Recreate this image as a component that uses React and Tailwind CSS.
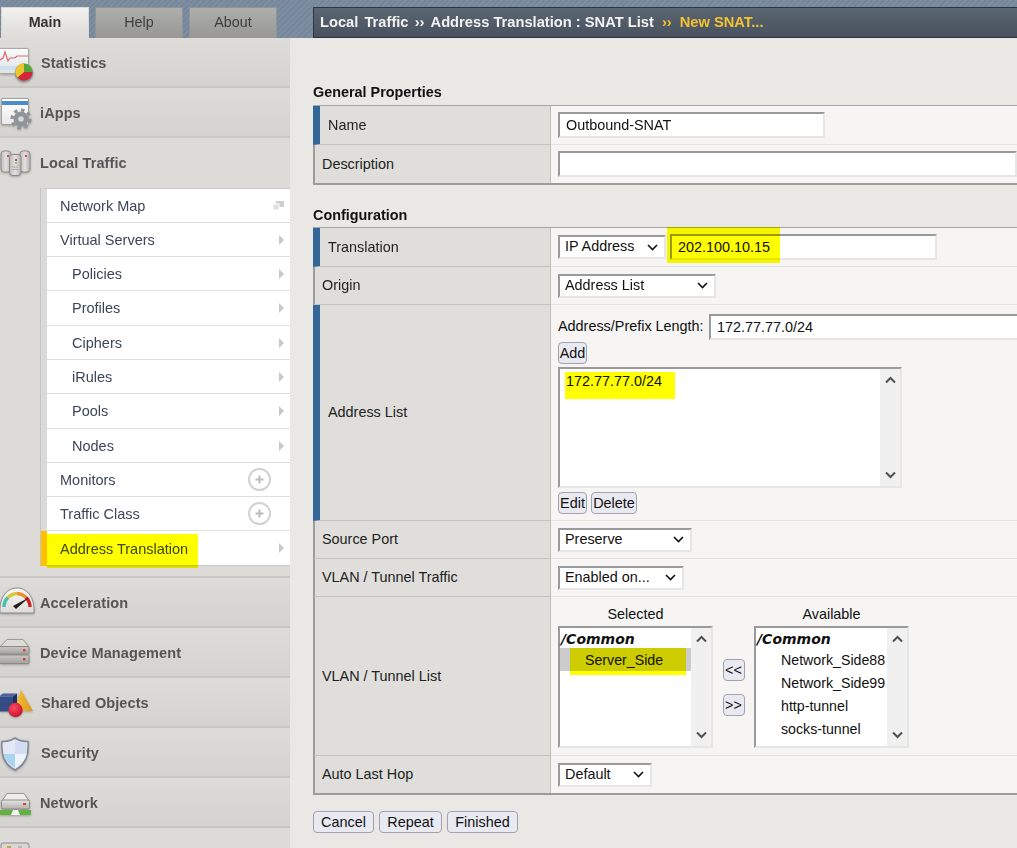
import React from "react";

const SANS = "font-['Liberation_Sans',Arial,sans-serif]";

function Ic({ children }) {
  return (
    <svg className="block shrink-0" width="40" height="50" viewBox="0 0 40 50">
      {children}
    </svg>
  );
}

function IconStats() {
  return (
    <Ic>
      <defs>
        <linearGradient id="st" x1="0" y1="0" x2="0" y2="1"><stop offset="0" stopColor="#fbfbfb" /><stop offset="1" stopColor="#dfe3e6" /></linearGradient>
      </defs>
      <rect x="-2" y="10" width="31" height="26" rx="2" fill="#a9a9a7" />
      <rect x="-2" y="11" width="30" height="24" rx="1" fill="url(#st)" />
      <rect x="-2" y="28" width="30" height="4" fill="#cfe0ee" />
      <path d="M0 22 L3 20 L5 14 L8 23 L10 20 L15 20 L17 18 L28 18" fill="none" stroke="#dc6a70" strokeWidth="1.2" />
      <circle cx="24" cy="35" r="9.5" fill="#7b7b78" opacity="0.45" />
      <circle cx="24" cy="34" r="8.5" fill="#55a63b" />
      <path d="M24 34 L32.5 34 A8.5 8.5 0 0 1 17.5 39.5 Z" fill="#d1263b" />
      <path d="M24 34 L17.5 39.5 A8.5 8.5 0 0 1 24 25.5 Z" fill="#eec52a" />
    </Ic>
  );
}

function IconApps() {
  return (
    <Ic>
      <defs>
        <linearGradient id="ap" x1="0" y1="0" x2="0" y2="1"><stop offset="0" stopColor="#ffffff" /><stop offset="1" stopColor="#e9e9e9" /></linearGradient>
      </defs>
      <rect x="1" y="10" width="28" height="27" rx="2" fill="#9f9f9d" />
      <rect x="2" y="11" width="26" height="25" rx="1" fill="url(#ap)" />
      <rect x="2" y="13" width="26" height="4" fill="#4d8ccb" />
      <circle cx="21" cy="31" r="7.5" fill="#8f9498" />
      <circle cx="21" cy="31" r="9" fill="none" stroke="#8f9498" strokeWidth="3.2" strokeDasharray="3.6 3.4" />
      <circle cx="21" cy="31" r="2.8" fill="#d8d8d6" />
    </Ic>
  );
}

function IconTraffic() {
  return (
    <Ic>
      <defs>
        <linearGradient id="lt" x1="0" y1="0" x2="1" y2="0"><stop offset="0" stopColor="#bdbcb9" /><stop offset="0.5" stopColor="#e2e1df" /><stop offset="1" stopColor="#b2b1ae" /></linearGradient>
      </defs>
      <rect x="1" y="13" width="10" height="21" rx="3" fill="url(#lt)" stroke="#8d8d8b" />
      <rect x="20" y="13" width="10" height="21" rx="3" fill="url(#lt)" stroke="#8d8d8b" />
      <rect x="9.5" y="16.5" width="11.5" height="21" rx="3" fill="url(#lt)" stroke="#868684" />
      <rect x="7" y="17" width="2" height="2" fill="#e04444" />
      <rect x="25" y="17" width="2" height="2" fill="#e04444" />
      <rect x="15" y="21" width="2" height="2" fill="#e04444" />
      <rect x="15" y="24" width="2" height="1.5" fill="#6fbf5a" />
      <path d="M12 29 H18 M12 31.5 H18" stroke="#a9a9a7" />
    </Ic>
  );
}

function IconAccel() {
  return (
    <Ic>
      <defs>
        <linearGradient id="ac" x1="0" y1="0" x2="0" y2="1"><stop offset="0" stopColor="#f8f8f6" /><stop offset="1" stopColor="#dcdbd8" /></linearGradient>
      </defs>
      <path d="M0 35 C-1 18 8 10 17 10 C26 10 35 18 34 35 Z" fill="url(#ac)" stroke="#8b8b89" />
      <path d="M4 29 A13.5 13.5 0 0 1 8 19.5" fill="none" stroke="#48bfb1" strokeWidth="3.4" />
      <path d="M8 19.5 A13.5 13.5 0 0 1 17 15.5" fill="none" stroke="#d9c93a" strokeWidth="3.4" />
      <path d="M17 15.5 A13.5 13.5 0 0 1 26 19.5" fill="none" stroke="#ea8f2c" strokeWidth="3.4" />
      <path d="M26 19.5 A13.5 13.5 0 0 1 30 29" fill="none" stroke="#cf2222" strokeWidth="3.4" />
      <path d="M13 28 L29 19.5 L16 31 Z" fill="#1d1d1d" />
    </Ic>
  );
}

function IconDevice() {
  return (
    <Ic>
      <defs>
        <linearGradient id="dv" x1="0" y1="0" x2="0" y2="1"><stop offset="0" stopColor="#c9c8c5" /><stop offset="1" stopColor="#a3a29f" /></linearGradient>
      </defs>
      <path d="M0 19 L7 11.5 H23 L29 19 Z" fill="#dcdbd8" stroke="#9b9b99" />
      <rect x="-1" y="18.5" width="30" height="7.5" rx="1" fill="url(#dv)" stroke="#8a8a88" />
      <rect x="-1" y="27" width="30" height="8.5" rx="1" fill="url(#dv)" stroke="#8a8a88" />
      <rect x="23" y="21" width="2.5" height="2.5" fill="#e23b3b" />
      <rect x="23" y="30" width="2.5" height="2.5" fill="#e23b3b" />
    </Ic>
  );
}

function IconShared() {
  return (
    <Ic>
      <defs>
        <radialGradient id="sp" cx="0.4" cy="0.35" r="0.7"><stop offset="0" stopColor="#ff4a62" /><stop offset="1" stopColor="#c2102c" /></radialGradient>
        <linearGradient id="tr" x1="0" y1="0" x2="1" y2="0"><stop offset="0" stopColor="#f2c23a" /><stop offset="1" stopColor="#dd9a1f" /></linearGradient>
      </defs>
      <path d="M21 12 L33 33 H14 Z" fill="url(#tr)" />
      <rect x="-1" y="18.5" width="14" height="15" fill="#344c86" />
      <path d="M-1 18.5 L3 15.5 H17 L13 18.5 Z" fill="#4a62a0" />
      <path d="M13 18.5 L17 15.5 V30 L13 33.5 Z" fill="#1f2f5c" />
      <circle cx="15.5" cy="32" r="7.2" fill="url(#sp)" />
    </Ic>
  );
}

function IconShield() {
  return (
    <Ic>
      <path d="M15 10 C11.5 12.5 6.5 13.5 2 13.5 C1 27 4 36 15 42 C26 36 29 27 28 13.5 C23.5 13.5 18.5 12.5 15 10 Z" fill="#e4e8f6" stroke="#7f8a96" strokeWidth="1.6" />
      <path d="M15 12 V26 H4 C5 32 9 36 15 39.8 Z" fill="#a8d6f0" />
      <path d="M15 26 H26.5 C25.5 32 21 36 15 39.8 Z" fill="#eef3fa" />
      <path d="M15 12 C18 13.6 22 15 26.6 15.2 L26.6 26 H15 Z" fill="#d4dcf3" />
    </Ic>
  );
}

function IconNetwork() {
  return (
    <Ic>
      <defs>
        <linearGradient id="nw" x1="0" y1="0" x2="0" y2="1"><stop offset="0" stopColor="#e6e5e3" /><stop offset="1" stopColor="#b2b1ae" /></linearGradient>
      </defs>
      <path d="M2 23 L7 15.5 H24 L29 23 Z" fill="#eeedeb" stroke="#999997" />
      <rect x="1.5" y="22" width="28" height="9" rx="1.5" fill="url(#nw)" stroke="#8a8a88" />
      <rect x="23" y="25" width="3" height="2" fill="#e23b3b" />
      <rect x="-1" y="32" width="32" height="5" fill="#63b13f" />
      <path d="M11 37 L13 32 H18 L20 37 Z" fill="#f5f5f3" />
    </Ic>
  );
}

function IconPartial() {
  return (
    <Ic>
      <rect x="1" y="15" width="28" height="30" rx="2" fill="#d9d7d3" stroke="#8d8d8b" />
      <rect x="7" y="18" width="4" height="3" fill="#c2a94f" />
      <rect x="18" y="18" width="4" height="3" fill="#b5b5b3" />
    </Ic>
  );
}

function Arrow() {
  return <span className="h-0 w-0 border-y-[5px] border-l-[5px] border-y-transparent border-l-[#c8c8c8]" />;
}

function Plus() {
  return (
    <span className="mr-[19px] flex h-[23px] w-[23px] items-center justify-center rounded-full border-2 border-[#d2d2d2] bg-white">
      <svg width="9" height="9" viewBox="0 0 9 9"><path d="M4.5 0.5 V8.5 M0.5 4.5 H8.5" stroke="#bcbcbc" strokeWidth="2" /></svg>
    </span>
  );
}

function NavItem({ icon, label, labelClass = "" }) {
  return (
    <div className="flex h-[50px] shrink-0 items-start overflow-hidden border-b-2 border-[#c9c7c3] bg-gradient-to-b from-[#dedcd8] to-[#d5d3cf]">
      <span className="flex w-[40px] shrink-0 drop-shadow-[0_1px_1px_rgba(0,0,0,0.25)]">{icon}</span>
      <span className={`pt-[15px] text-[14.5px] font-bold leading-[20px] tracking-[0.1px] text-[#555] ${labelClass}`}>{label}</span>
    </div>
  );
}

const SUB = [
  ["Network Map", 0, "map", "h-[34px]"],
  ["Virtual Servers", 0, "arrow", "h-[34px]"],
  ["Policies", 1, "arrow", "h-[34px]"],
  ["Profiles", 1, "arrow", "h-[35px]"],
  ["Ciphers", 1, "arrow", "h-[34px]"],
  ["iRules", 1, "arrow", "h-[34px]"],
  ["Pools", 1, "arrow", "h-[35px]"],
  ["Nodes", 1, "arrow", "h-[34px]"],
  ["Monitors", 0, "plus", "h-[34px]"],
  ["Traffic Class", 0, "plus", "h-[34px]"],
];

function SubRow({ label, indent, kind, h }) {
  return (
    <div className={`flex ${h} items-center justify-between border-b border-[#dedede] bg-white`}>
      <span className={`pt-[2px] text-[14.5px] text-[#3c4658] ${indent ? "pl-[25px]" : "pl-[13px]"}`}>{label}</span>
      {kind === "arrow" && <span className="mr-[6px] flex"><Arrow /></span>}
      {kind === "plus" && <Plus />}
      {kind === "map" && (
        <svg className="mr-[6px]" width="11" height="9" viewBox="0 0 11 9">
          <rect x="3" y="0" width="8" height="6" fill="#cfcfcf" />
          <rect x="0" y="3" width="6" height="6" fill="#dedede" stroke="#fff" />
        </svg>
      )}
    </div>
  );
}

function Sidebar() {
  return (
    <aside className="flex h-[810px] w-[290px] shrink-0 flex-col overflow-hidden bg-[#dddbd7]">
      <NavItem icon={<IconStats />} label="Statistics" labelClass="ml-[1px]" />
      <NavItem icon={<IconApps />} label="iApps" />
      <div className="flex h-[50px] shrink-0 items-start">
        <span className="flex w-[40px] shrink-0 drop-shadow-[0_1px_1px_rgba(0,0,0,0.25)]"><IconTraffic /></span>
        <span className="pt-[15px] text-[14.5px] font-bold leading-[20px] tracking-[0.1px] text-[#555]">Local Traffic</span>
      </div>
      <div className="relative ml-[41px] flex h-[378px] shrink-0 flex-col border-y border-l-[6px] border-[#c8c8c8] border-l-[#dadada] shadow-[-1px_0_0_#c4c4c4]">
        {SUB.map(([l, i, k, h]) => <SubRow key={l} label={l} indent={i} kind={k} h={h} />)}
        <div className="flex flex-1 items-center justify-between bg-white">
          <span className="pl-[13px] pt-[3px] text-[14.5px] text-[#3c4658]">Address Translation</span>
          <span className="mr-[6px] flex"><Arrow /></span>
        </div>
        <span className="absolute bottom-[-1px] left-[-6px] top-[342px] w-[6px] bg-[#ffc000]" />
        <span className="absolute bottom-[-3px] left-0 top-[345px] w-[151px] bg-[#ffff00] mix-blend-multiply" />
      </div>
      <div className="h-[12px] shrink-0 border-b-2 border-[#c9c7c3]" />
      <NavItem icon={<IconAccel />} label="Acceleration" />
      <NavItem icon={<IconDevice />} label="Device Management" />
      <NavItem icon={<IconShared />} label="Shared Objects" labelClass="ml-[1px]" />
      <NavItem icon={<IconShield />} label="Security" labelClass="ml-[1px]" />
      <NavItem icon={<IconNetwork />} label="Network" />
      <div className="h-[20px] shrink-0 overflow-hidden"><IconPartial /></div>
    </aside>
  );
}

function Row({ blue, h, label, children, last }) {
  return (
    <div className={`flex ${h}`}>
      <div className={`flex w-[238px] shrink-0 items-center border-r border-[#bdbcb9] bg-[#dfdedb] pt-[1px] text-[14.4px] text-[#222] ${last ? "" : "border-b border-b-[#c4c3c0]"} ${blue ? "border-l-[7px] border-l-[#336699] pl-[8px]" : "border-l-2 border-l-[#9c9c9c] pl-[7px]"}`}>
        {label}
      </div>
      <div className={`min-w-0 flex-1 bg-[#f6f5f3] pl-[7px] ${last ? "" : "border-b border-b-[#e3e2e0]"}`}>{children}</div>
    </div>
  );
}

const FIELD = "border-2 border-t-[#9a9a9a] border-l-[#9a9a9a] border-r-[#e6e6e6] border-b-[#e6e6e6] bg-white text-[14.4px] text-[#111]";

function Input({ w, value = "", className = "" }) {
  return <input readOnly value={value} className={`h-[26px] pl-[6px] outline-none ${FIELD} ${w} ${className}`} />;
}

function Select({ w, value }) {
  return (
    <div className={`flex h-[24px] items-center justify-between pl-[5px] pr-[6px] ${FIELD} ${w}`}>
      <span>{value}</span>
      <svg width="11" height="7" viewBox="0 0 11 7"><path d="M1 1 L5.5 5.5 L10 1" fill="none" stroke="#111" strokeWidth="1.6" /></svg>
    </div>
  );
}

function Btn({ children, className = "" }) {
  return <button className={`h-[22px] rounded-[4px] border border-[#a2a2ae] bg-[#e9e9f1] text-[14.4px] leading-none text-[#111] ${className}`}>{children}</button>;
}

function ScrollBar() {
  return (
    <div className="flex w-[20px] shrink-0 flex-col items-center justify-between bg-[#f0f0f0] py-[7px]">
      <svg width="11" height="8" viewBox="0 0 11 8"><path d="M1 6.5 L5.5 2 L10 6.5" fill="none" stroke="#505050" strokeWidth="2" /></svg>
      <svg width="11" height="8" viewBox="0 0 11 8"><path d="M1 1.5 L5.5 6 L10 1.5" fill="none" stroke="#505050" strokeWidth="2" /></svg>
    </div>
  );
}

function VlanBox({ title, children, w }) {
  return (
    <div className={`flex ${w} flex-col`}>
      <div className="h-[22px] pt-[1px] text-center text-[14.4px] leading-[18px] text-[#111]">{title}</div>
      <div className="flex h-[122px] border-2 border-t-[#9a9a9a] border-l-[#9a9a9a] border-r-[#e6e6e6] border-b-[#e6e6e6] bg-white">
        <div className="relative min-w-0 flex-1 pt-[2px]">
          <div className="h-[18px] pl-[1px] font-['DejaVu_Sans',sans-serif] text-[14px] font-bold italic leading-[19px] text-[#111]">/Common</div>
          {children}
        </div>
        <ScrollBar />
      </div>
    </div>
  );
}

function Opt({ children }) {
  return <div className="h-[23px] whitespace-nowrap pl-[25px] text-[14.2px] leading-[24px] text-[#111]">{children}</div>;
}

function SectionTitle({ children, className }) {
  return <h2 className={`text-[14.4px] font-bold leading-[18px] text-[#111] ${className}`}>{children}</h2>;
}

function Main() {
  return (
    <main className="relative min-w-0 flex-1 overflow-hidden pl-[23px]">
      <SectionTitle className="pt-[45px]">General Properties</SectionTitle>
      <div className="mt-[4px] border-t border-b-2 border-t-[#a5a5a5] border-b-[#9c9c9c]">
        <Row blue h="h-[39px]" label="Name">
          <div className="flex h-full items-center"><Input w="w-[267px]" value="Outbound-SNAT" /></div>
        </Row>
        <Row last h="h-[38px]" label="Description">
          <div className="flex h-full items-center"><Input w="w-[480px]" /></div>
        </Row>
      </div>
      <SectionTitle className="pt-[21px]">Configuration</SectionTitle>
      <div className="mt-[3px] border-t border-b-2 border-t-[#a5a5a5] border-b-[#9c9c9c]">
        <Row blue h="h-[39px]" label="Translation">
          <div className="relative flex h-full items-center gap-[4px]">
            <Select w="w-[108px]" value="IP Address" />
            <Input w="w-[267px]" value="202.100.10.15" />
            <span className="absolute left-[109px] top-[-1px] h-[36px] w-[113px] bg-[#ffff00] mix-blend-multiply" />
          </div>
        </Row>
        <Row h="h-[38px]" label="Origin">
          <div className="flex h-full items-center"><Select w="w-[158px]" value="Address List" /></div>
        </Row>
        <Row blue h="h-[216px]" label="Address List">
          <div className="flex items-center gap-[4px] pt-[9px] text-[14.4px] text-[#111]">
            <span className="w-[147px] shrink-0 whitespace-nowrap">Address/Prefix Length:</span>
            <Input w="w-[320px]" value="172.77.77.0/24" className="shrink-0" />
          </div>
          <Btn className="mt-[2px] block w-[29px]">Add</Btn>
          <div className="relative mt-[3px] flex h-[121px] w-[344px] border-2 border-t-[#9a9a9a] border-l-[#9a9a9a] border-r-[#e6e6e6] border-b-[#e6e6e6] bg-white">
            <div className="flex-1 pl-[6px] pt-[3px] text-[14.4px] leading-[18px] text-[#111]">172.77.77.0/24</div>
            <ScrollBar />
            <span className="absolute left-[5px] top-[3px] h-[27px] w-[110px] bg-[#ffff00] mix-blend-multiply" />
          </div>
          <div className="mt-[4px] flex gap-[4px]">
            <Btn className="w-[29px]">Edit</Btn>
            <Btn className="w-[46px]">Delete</Btn>
          </div>
        </Row>
        <Row h="h-[38px]" label="Source Port">
          <div className="flex h-full items-center"><Select w="w-[134px]" value="Preserve" /></div>
        </Row>
        <Row h="h-[38px]" label="VLAN / Tunnel Traffic">
          <div className="flex h-full items-center"><Select w="w-[126px]" value="Enabled on..." /></div>
        </Row>
        <Row h="h-[159px]" label="VLAN / Tunnel List">
          <div className="flex pt-[7px]">
            <VlanBox title="Selected" w="w-[155px]">
              <div className="h-[23px] bg-[#cccccc] pl-[25px] text-[14.2px] leading-[24px] text-[#111]">Server_Side</div>
              <span className="absolute left-[10px] top-[20px] h-[27px] w-[116px] bg-[#ffff00] mix-blend-multiply" />
            </VlanBox>
            <div className="flex w-[41px] flex-col items-center gap-[13px] pt-[55px]">
              <Btn className="w-[22px]">&lt;&lt;</Btn>
              <Btn className="w-[22px]">&gt;&gt;</Btn>
            </div>
            <VlanBox title="Available" w="w-[155px]">
              <Opt>Network_Side88</Opt>
              <Opt>Network_Side99</Opt>
              <Opt>http-tunnel</Opt>
              <Opt>socks-tunnel</Opt>
            </VlanBox>
          </div>
        </Row>
        <Row last h="h-[37px]" label="Auto Last Hop">
          <div className="flex h-full items-center"><Select w="w-[94px]" value="Default" /></div>
        </Row>
      </div>
      <div className="mt-[16px] flex gap-[5px]">
        <Btn className="w-[61px]">Cancel</Btn>
        <Btn className="w-[63px]">Repeat</Btn>
        <Btn className="w-[71px]">Finished</Btn>
      </div>
    </main>
  );
}

function Tab({ children, active }) {
  return (
    <div className={`flex h-[31px] w-[88px] items-center justify-center border border-b-0 text-[14.3px] ${active ? "border-[#d8d8d4] bg-gradient-to-b from-[#f2f1ef] to-[#dddbd7] font-bold text-[#333]" : "border-[#8f949b] bg-gradient-to-b from-[#aeaeaa] to-[#979793] text-[#3d3d3d]"}`}>
      {children}
    </div>
  );
}

function Topbar() {
  return (
    <header className="flex h-[38px] shrink-0 items-end bg-[repeating-linear-gradient(135deg,#76879b_0px,#76879b_2px,#7e8ea1_2px,#7e8ea1_4px)]">
      <div className="flex w-[313px] shrink-0 gap-[6px] pl-[1px]">
        <Tab active>Main</Tab>
        <Tab>Help</Tab>
        <Tab>About</Tab>
      </div>
      <div className="flex h-[31px] flex-1 items-center border border-r-0 border-[#2e3540] bg-gradient-to-b from-[#5b6673] to-[#48525e] pb-[1px] pl-[6px] text-[14.7px] font-bold text-[#f2f2f2]">
        <span className="[word-spacing:2px]">Local Traffic</span>
        <span className="mx-[4px] w-[14px] text-center">››</span>
        <span>Address Translation : SNAT List</span>
        <span className="mx-[8px] text-[#f6c12f]">››</span>
        <span className="text-[#f6c12f]">New SNAT...</span>
      </div>
    </header>
  );
}

export default function App() {
  return (
    <div className={`flex h-[848px] w-[1017px] flex-col overflow-hidden bg-[#e9e8e5] ${SANS}`}>
      <Topbar />
      <div className="flex min-h-0 flex-1">
        <Sidebar />
        <Main />
      </div>
    </div>
  );
}
